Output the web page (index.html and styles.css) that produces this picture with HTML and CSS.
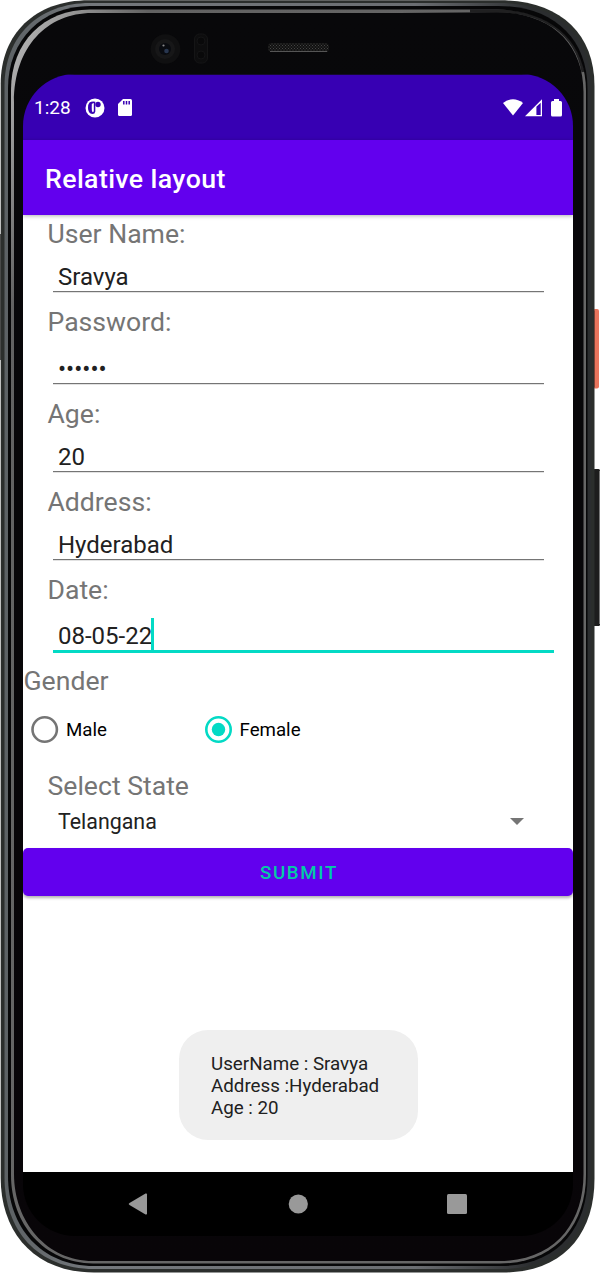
FILE: index.html
```html
<!DOCTYPE html>
<html lang="en">
<head>
<meta charset="utf-8">
<title>Relative layout</title>
<link rel="stylesheet" href="styles.css">
</head>
<body>
<div class="phone">
  <svg class="frame" viewBox="0 0 600 1273" aria-hidden="true">
    <defs>
      <linearGradient id="rim" x1="0" y1="0" x2="1" y2="1">
        <stop offset="0" stop-color="#c0c0c0"/><stop offset=".12" stop-color="#626262"/>
        <stop offset=".5" stop-color="#666"/><stop offset="1" stop-color="#666"/>
      </linearGradient>
      <linearGradient id="steel" x1="0" y1="0" x2="1" y2="0">
        <stop offset="0" stop-color="#5c6164"/><stop offset=".15" stop-color="#74787c"/><stop offset=".7" stop-color="#6b6e72"/><stop offset=".9" stop-color="#2b2d2f"/><stop offset="1" stop-color="#2b2d2f"/>
      </linearGradient>
      <linearGradient id="shade" x1="0" y1="0" x2="0" y2="1">
        <stop offset="0" stop-color="#08080a"/><stop offset="1" stop-color="#080508"/>
      </linearGradient>
      <pattern id="mesh" width="3" height="3" patternUnits="userSpaceOnUse">
        <rect width="3" height="3" fill="#111"/><path d="M0 0h1v1H0zM1.5 1.5h1v1h-1z" fill="#444"/>
      </pattern>
    </defs>
    <rect x="593" y="309" width="6" height="79.500" rx="2" fill="#e9745c"/>
    <path d="M594.500 311v76" stroke="#c95440"/>
    <rect x="593" y="469" width="7" height="157" rx="1.500" fill="#1d1d1d"/>
    <path d="M599.500 471v153" stroke="#777"/>
    <path d="M0 234v126" stroke="#555" stroke-width="2"/>
    <path d="M89 .3H500C558 .3 594.500 32 594.500 86V1179C594.500 1233 564 1272.500 503 1272.500H94C34 1272.500 .7 1232 .7 1178V84C.7 34 35 .3 89 .3Z" fill="#2b2e2c"/>
    <path d="M90 3H499C555 3 591 34 591 87V1178C591 1230 561 1269 502 1269H94C37 1269 4.500 1230 4.500 1177V86C4.500 36 39 3 90 3Z" fill="url(#steel)"/>
    <path d="M90 6H498C552 6 587.500 37 587.500 89V1177C587.500 1227 558 1266 501 1266H94C41 1266 8 1227 8 1176V88C8 40 42 6 90 6Z" fill="#070708"/>
    <path d="M90 9.500H497C550 10.500 586 40 586 91V1175C586 1224 556 1263.500 500 1263.500H93C44 1263 11 1224 11 1175V90C11 42 44 9.500 90 9.500Z" fill="url(#rim)"/>
    <path d="M92 13H400L497 12.300C550 12.300 583.500 43 583.500 92V1174C583.500 1222 556 1261 499 1261H93C47 1261 14 1222 14 1174V102C14 47 47 13 92 13Z" fill="url(#shade)"/>
    <path d="M470 11H497C543 11 576 33 583 72" fill="none" stroke="#0a0a0b" stroke-width="3" opacity=".75"/>
    <circle cx="165.500" cy="49" r="14.800" fill="#101011"/>
    <circle cx="165" cy="49" r="10" fill="#171718"/>
    <circle cx="165" cy="49" r="6" fill="#090b10"/>
    <circle cx="166.500" cy="51" r="2.300" fill="#28364f"/>
    <circle cx="163.500" cy="45.500" r="1.100" fill="#888"/>
    <rect x="194.500" y="34" width="13" height="29" rx="5" fill="#0d0d0e" stroke="#151516"/>
    <circle cx="201" cy="41" r="4" fill="#09090a" stroke="#141415"/>
    <circle cx="201" cy="55" r="4" fill="#09090a" stroke="#141415"/>
    <rect x="268" y="43" width="61" height="9" rx="4" fill="url(#mesh)"/>
    <path d="M270 51.500h57" stroke="#555"/>
  </svg>

  <main class="screen">
    <header class="status">
      <span class="clock">1:28</span>
      <svg class="app-icon" viewBox="0 0 20 20"><circle cx="10" cy="10" r="9.500" fill="#fff"/><path d="M4.500 4.500Q7 3 10.300 3.800V13.500Q10 16 7.500 16Q3 15.500 3 10Q3 6 4.500 4.500Z" fill="#3700b3"/><path d="M6.800 6.500Q7 5 8.800 5V13Q8.500 14.500 7.500 14Q6.500 13 6.800 6.500Z" fill="#fff"/><circle cx="13" cy="6.500" r="2.700" fill="#3700b3"/></svg>
      <svg class="sd-icon" viewBox="0 0 14 18"><path d="M5 0H12.500Q14 0 14 1.500V15.500Q14 17 12.500 17H1.500Q0 17 0 15.500V5Z" fill="#fff"/><path d="M5.800 2v3.400M8.500 2v3.400M11.200 2v3.400" stroke="#3700b3" stroke-width="1.500"/></svg>
      <svg class="signals" viewBox="0 0 60 18">
        <path d="M0 4Q10-3.500 20 4L10 16.500Z" fill="#fff"/>
        <path d="M22 17.300L39 .3V17.300Z" fill="#fff"/><path d="M33.400 7.700L37.700 3.700V16H33.400Z" fill="#3700b3"/>
        <path d="M51 0h5v2h1.500Q59 2 59 3.500V16Q59 17.500 57.500 17.500H49.500Q48 17.500 48 16V3.500Q48 2 49.500 2H51Z" fill="#fff"/>
      </svg>
    </header>
    <h1 class="appbar">Relative layout</h1>

    <div class="content">
      <form class="form">
        <div class="field"><label class="label">User Name:</label><div class="input">Sravya</div></div>
        <div class="field password"><label class="label">Password:</label><div class="input">••••••</div></div>
        <div class="field"><label class="label">Age:</label><div class="input">20</div></div>
        <div class="field"><label class="label">Address:</label><div class="input">Hyderabad</div></div>
        <div class="field focused"><label class="label">Date:</label><div class="input">08-05-22<i class="caret"></i></div></div>
        <div class="label gender">Gender</div>
        <div class="radios">
          <div class="radio"><svg class="ring" viewBox="0 0 28 28"><circle cx="13.700" cy="13.500" r="12.200" fill="none" stroke="#757575" stroke-width="2.600"/></svg>Male</div>
          <div class="radio"><svg class="ring" viewBox="0 0 28 28"><circle cx="13.500" cy="13.500" r="12.200" fill="none" stroke="#03dac5" stroke-width="2.600"/><circle cx="13.500" cy="13.500" r="6.700" fill="#03dac5"/></svg>Female</div>
        </div>
        <div class="label state">Select State</div>
        <div class="select"><span>Telangana</span><svg class="arrow" viewBox="0 0 14 7"><path d="M0 0H14L7 7Z" fill="#757575"/></svg></div>
        <button class="submit" type="button">SUBMIT</button>
      </form>

      <div class="toast">UserName : Sravya<br>Address :Hyderabad<br>Age : 20</div>
    </div>

    <nav class="nav">
      <svg class="nav-icon" viewBox="0 0 24 24"><path d="M3.500 11L19.500 1.600Q21 1 21 2.500V21.500Q21 23 19.500 22.400L3.500 13Q1.800 12 3.500 11Z" fill="#999"/></svg>
      <svg class="nav-icon" viewBox="0 0 24 24"><circle cx="12.300" cy="12" r="9.600" fill="#999"/></svg>
      <svg class="nav-icon" viewBox="0 0 24 24"><rect x="2" y="2" width="20" height="20" rx="1.500" fill="#999"/></svg>
    </nav>
  </main>
</div>
</body>
</html>
```
FILE: styles.css
```css
* { box-sizing: border-box; }
body { margin: 0; background: #fff; font-family: Roboto, sans-serif; }
.phone { position: relative; width: 600px; height: 1273px; padding: 74px 27px 37px 23px; overflow: hidden; }
.frame { position: absolute; inset: 0; width: 600px; height: 1273px; }
.screen { position: relative; width: 550px; height: 1162px; display: flex; flex-direction: column; border-radius: 52px; overflow: hidden; }

.status { height: 66px; flex: none; display: flex; align-items: center; padding: 0 10px 0 11px; background: #3700b3; border-top: 1px solid #150832; color: #fff; }
.clock { font-size: 19px; width: 51px; }
.app-icon { width: 20px; height: 20px; }
.sd-icon { width: 14px; height: 18px; margin-left: 12.5px; }
.signals { width: 60px; height: 18px; margin-left: auto; }
.appbar { position: relative; height: 75px; flex: none; margin: 0; padding: 2px 22px 0; display: flex; align-items: center; background: #6200ee; color: #fff; font-size: 26.7px; font-weight: 500; letter-spacing: .4px; box-shadow: 0 1px 4px rgba(0,0,0,.3); }

.content { flex: 1; display: flex; flex-direction: column; background: #fff; }
.form { padding-top: 3px; }
.field { height: 88px; padding: 0 29px 0 25px; }
.label { display: block; height: 31px; line-height: 31px; font-size: 26.6px; color: #757575; white-space: nowrap; text-indent: -.5px; }
.input { display: flex; align-items: flex-end; height: 43px; margin-left: 5px; padding: 0 5px 1px; font-size: 24px; line-height: 26px; color: #212121; border-bottom: 1px solid #757575; box-shadow: 0 1px #e2e2e2; }
.password { height: 92px; }
.password .input { height: 47px; padding-bottom: 1px; }
.focused { height: 91px; padding-right: 19px; }
.focused .input { height: 48px; padding-bottom: 1px; border-bottom: 3px solid #03dac5; box-shadow: none; }
.caret { width: 2.5px; height: 32px; margin: 0 0 -1px -1px; background: #03dac5; }
.gender { padding-left: 1px; }
.radios { display: flex; height: 75px; padding: 20px 0 0 8px; }
.radio { display: flex; align-items: center; height: 28px; width: 173.5px; gap: 7px; font-size: 18.7px; color: #000; }
.ring { width: 28px; height: 28px; }
.state { padding-left: 25px; line-height: 29px; }
.select { display: flex; align-items: center; justify-content: space-between; height: 46px; padding: 0 49px 7px 35px; font-size: 21.4px; color: #212121; }
.arrow { width: 14px; height: 7px; }
.submit { display: block; width: 550px; height: 48px; padding: 2px 0 0 2px; border: 0; border-radius: 5px; background: #6200ee; color: #03cba5; font: 500 18.7px Roboto, sans-serif; letter-spacing: 1.67px; box-shadow: 0 2px 3px rgba(0,0,0,.3); }

.toast { align-self: flex-start; width: 239px; height: 110px; margin: auto 0 32px 156px; padding: 24px 32px; border-radius: 29px; background: #efefef; color: #212121; font-size: 18.75px; line-height: 21.8px; white-space: nowrap; }
.nav { display: flex; justify-content: space-between; align-items: center; flex: none; height: 64px; padding: 0 104px 0 103px; background: #000; }
.nav-icon { width: 24px; height: 24px; }
```
